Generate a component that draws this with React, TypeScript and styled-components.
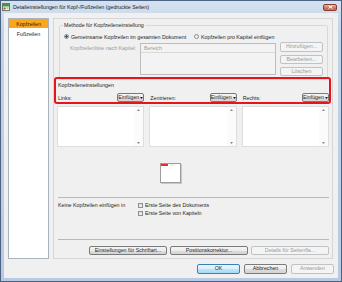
import React from 'react';
import styled, { createGlobalStyle } from 'styled-components';

const GlobalStyle = createGlobalStyle`
  html, body { margin: 0; padding: 0; background: #ffffff; }
  body {
    font-family: "Liberation Sans", Arial, sans-serif;
    font-size: 5.3px;
    color: #1e1e1e;
  }
  * { box-sizing: border-box; }
`;

const Window = styled.div`
  width: 342px;
  height: 282px;
  display: flex;
  flex-direction: column;
  border: 1px solid #4c6280;
  background: linear-gradient(#d5e1ef, #c1d3e9 30px, #b6cae3);
`;

const TitleBar = styled.div`
  height: 12px;
  display: flex;
  align-items: center;
  gap: 3px;
  padding: 0 4px 0 1px;
`;

const TitleText = styled.span`
  flex: 1;
  line-height: 6px;
  color: #1a1a1a;
  white-space: nowrap;
`;

const CloseButton = styled.div`
  width: 14px;
  height: 7px;
  border: 1px solid #8d3b2c;
  border-radius: 2px;
  background: linear-gradient(#eab0a2, #d4806d 50%, #c45f49 51%, #d07a5e);
  display: flex;
  align-items: center;
  justify-content: center;
`;

const Client = styled.div`
  flex: 1;
  margin: 0 3px 3px 3px;
  background: #f0f0f0;
  padding: 5px 4px 4px 4px;
  display: flex;
  flex-direction: column;
  gap: 5px;
  min-height: 0;
`;

const Main = styled.div`
  flex: 1;
  display: flex;
  gap: 4px;
  min-height: 0;
`;

const SideList = styled.div`
  width: 44px;
  background: #ffffff;
  border: 1px solid #aab3bd;
  display: flex;
  flex-direction: column;
`;

const SideItem = styled.div<{ $selected?: boolean }>`
  height: 9px;
  margin-bottom: 1px;
  display: flex;
  align-items: center;
  justify-content: center;
  background: ${p => (p.$selected ? '#f9a61b' : 'transparent')};
  color: #1e1e1e;
`;

const Panel = styled.div`
  flex: 1;
  margin-right: 1px;
  border: 1px solid #d6d6d6;
  position: relative;
  display: flex;
  flex-direction: column;
`;

const Highlight = styled.div`
  position: absolute;
  left: 0;
  top: 58px;
  width: 277px;
  height: 27px;
  border: 2px solid #e8141c;
  border-radius: 3px;
  pointer-events: none;
  z-index: 2;
`;

const Group = styled.fieldset`
  margin: 3px 4px 0 5px;
  padding: 0 4px 3px 4px;
  border: 1px solid #d3d9de;
  border-radius: 2px;
  min-width: 0;
`;

const Legend = styled.legend`
  padding: 0 1px;
  margin-left: -1px;
  line-height: 6px;
`;

const RadioRow = styled.div`
  margin-top: 5px;
  height: 7px;
  display: grid;
  grid-template-columns: 130px auto;
  align-items: center;
`;

const RadioOption = styled.label`
  display: flex;
  align-items: center;
  gap: 2px;
  white-space: nowrap;
`;

const RadioCircle = styled.span<{ $checked?: boolean }>`
  width: 5px;
  height: 5px;
  border-radius: 50%;
  border: 1px solid #8c8c8c;
  background: ${p =>
    p.$checked
      ? 'radial-gradient(circle, #2a5c8a 0 1.2px, #e9eef3 1.4px)'
      : 'linear-gradient(#e6e6e6, #fafafa)'};
`;

const MethodRow = styled.div`
  margin-top: 3px;
  display: flex;
  align-items: flex-start;
`;

const DimLabel = styled.div`
  width: 70px;
  margin-left: 6px;
  padding-top: 2px;
  line-height: 6px;
  color: #9a9a9a;
  white-space: nowrap;
`;

const ListBox = styled.div`
  width: 136px;
  height: 32px;
  border: 1px solid #bdbdbd;
  background: #f3f3f3;
  display: flex;
  flex-direction: column;
`;

const ListHeader = styled.div`
  height: 9px;
  border-bottom: 1px solid #d9d9d9;
  padding-left: 3px;
  display: flex;
  align-items: center;
  color: #9a9a9a;
`;

const SideButtons = styled.div`
  margin-left: 4px;
  margin-top: -1px;
  display: flex;
  flex-direction: column;
  gap: 3px;
`;

type Variant = 'normal' | 'disabled' | 'focused';

const Btn = styled.button<{ $variant?: Variant; $w: number; $h?: number }>`
  width: ${p => p.$w}px;
  height: ${p => p.$h ?? 9}px;
  padding: 0;
  margin: 0;
  font: inherit;
  line-height: 1;
  display: flex;
  align-items: center;
  justify-content: center;
  gap: 1px;
  border-radius: 2px;
  white-space: nowrap;
  border: 1px solid
    ${p =>
      p.$variant === 'disabled' ? '#bfc3c6' : p.$variant === 'focused' ? '#3c7fb1' : '#7a7a7a'};
  background: ${p =>
    p.$variant === 'disabled'
      ? '#f4f4f4'
      : p.$variant === 'focused'
      ? 'linear-gradient(#eaf6fd, #d9f0fc 50%, #bee6fd 51%, #a7d9f5)'
      : 'linear-gradient(#f4f4f4, #ececec 50%, #dedede 51%, #d3d3d3)'};
  color: ${p => (p.$variant === 'disabled' ? '#9a9a9a' : '#1e1e1e')};
`;

const Section = styled.div`
  flex: 1;
  display: flex;
  flex-direction: column;
  padding: 0 3px 3px 3px;
  min-height: 0;
`;

const SectionTitle = styled.div`
  margin-top: 2px;
  margin-left: 1px;
  line-height: 6px;
`;

const Columns = styled.div`
  margin-top: 5px;
  display: grid;
  grid-template-columns: repeat(3, 1fr);
  column-gap: 5px;
`;

const Column = styled.div`
  display: flex;
  flex-direction: column;
  gap: 4px;
`;

const ColumnHead = styled.div`
  height: 9px;
  display: flex;
  align-items: center;
  justify-content: space-between;
  padding-left: 1px;
`;

const TextBox = styled.div`
  height: 41px;
  background: #ffffff;
  border: 1px solid #dedede;
  display: flex;
  justify-content: flex-end;
`;

const ScrollTrack = styled.div`
  width: 9px;
  display: flex;
  flex-direction: column;
  justify-content: space-between;
  align-items: center;
  padding: 2px 0;
  background: #fbfbfb;
`;

const Thumb = styled.div`
  margin-top: 16px;
  margin-left: 103px;
  width: 21px;
  height: 20px;
  background: #ffffff;
  border: 1px solid #9d9d9d;
  box-shadow: 1px 1px 0 #c8c8c8;
  display: flex;
  align-items: flex-start;
  gap: 2px;
`;

const ThumbBar = styled.div<{ $color: string; $w: number }>`
  width: ${p => p.$w}px;
  height: 2px;
  background: ${p => p.$color};
`;

const Separator = styled.div<{ $mt: number }>`
  margin-top: ${p => p.$mt}px;
  margin-left: 1px;
  height: 1px;
  background: #b9b9b9;
`;

const SkipRow = styled.div`
  margin-top: 3px;
  display: flex;
  align-items: flex-start;
`;

const SkipLabel = styled.div`
  width: 80px;
  margin-left: 1px;
  height: 8px;
  display: flex;
  align-items: center;
  white-space: nowrap;
`;

const CheckList = styled.div`
  display: flex;
  flex-direction: column;
`;

const CheckItem = styled.label`
  height: 8px;
  display: flex;
  align-items: center;
  gap: 2px;
  white-space: nowrap;
`;

const CheckBox = styled.span`
  width: 5px;
  height: 5px;
  border: 1px solid #8e8f8f;
  background: linear-gradient(#dcdcdc, #f6f6f6);
`;

const Spacer = styled.div`
  flex: 1;
`;

const PanelButtons = styled.div`
  margin-top: 6px;
  display: flex;
  justify-content: flex-end;
  gap: 3px;
`;

const DialogButtons = styled.div`
  height: 10px;
  display: flex;
  justify-content: flex-end;
  gap: 4px;
`;

const Arrow = ({ down }: { down?: boolean }) => (
  <svg width="3" height="2" viewBox="0 0 3 2">
    <polygon points={down ? '0,0 3,0 1.5,2' : '0,2 3,2 1.5,0'} fill="#8a8a8a" />
  </svg>
);

const Caret = () => (
  <svg width="3" height="2" viewBox="0 0 3 2">
    <polygon points="0,0 3,0 1.5,2" fill="#1e1e1e" />
  </svg>
);

const AppIcon = () => (
  <svg width="8" height="8" viewBox="0 0 8 8">
    <rect x="0.5" y="0.5" width="7" height="7" fill="#f4f4f4" stroke="#6c7a6a" strokeWidth="1" />
    <rect x="1" y="1" width="6" height="2.5" fill="#3f9a3b" />
    <rect x="1.5" y="4.5" width="2" height="2" fill="#d23a2a" />
    <rect x="4.5" y="4.5" width="2" height="1" fill="#8a8a8a" />
  </svg>
);

const CloseGlyph = () => (
  <svg width="5" height="4" viewBox="0 0 5 4">
    <path d="M0.5 0.5 L4.5 3.5 M4.5 0.5 L0.5 3.5" stroke="#ffffff" strokeWidth="1" />
  </svg>
);

const columns = ['Links:', 'Zentrieren:', 'Rechts:'];

export default function App() {
  return (
    <>
      <GlobalStyle />
      <Window>
        <TitleBar>
          <AppIcon />
          <TitleText>Detaileinstellungen für Kopf-/Fußzeilen (gedruckte Seiten)</TitleText>
          <CloseButton>
            <CloseGlyph />
          </CloseButton>
        </TitleBar>
        <Client>
          <Main>
            <SideList>
              <SideItem $selected>Kopfzeilen</SideItem>
              <SideItem>Fußzeilen</SideItem>
            </SideList>
            <Panel>
              <Highlight />
              <Group>
                <Legend>Methode für Kopfzeileneinstellung</Legend>
                <RadioRow>
                  <RadioOption>
                    <RadioCircle $checked />
                    Gemeinsame Kopfzeilen im gesamten Dokument
                  </RadioOption>
                  <RadioOption>
                    <RadioCircle />
                    Kopfzeilen pro Kapitel einfügen
                  </RadioOption>
                </RadioRow>
                <MethodRow>
                  <DimLabel>Kopfzeilenliste nach Kapitel:</DimLabel>
                  <ListBox>
                    <ListHeader>Bereich</ListHeader>
                  </ListBox>
                  <SideButtons>
                    <Btn $variant="disabled" $w={43} $h={10}>Hinzufügen...</Btn>
                    <Btn $variant="disabled" $w={43}>Bearbeiten...</Btn>
                    <Btn $variant="disabled" $w={43}>Löschen</Btn>
                  </SideButtons>
                </MethodRow>
              </Group>
              <Section>
                <SectionTitle>Kopfzeileneinstellungen</SectionTitle>
                <Columns>
                  {columns.map(c => (
                    <Column key={c}>
                      <ColumnHead>
                        <span>{c}</span>
                        <Btn $w={27}>
                          Einfügen
                          <Caret />
                        </Btn>
                      </ColumnHead>
                      <TextBox>
                        <ScrollTrack>
                          <Arrow />
                          <Arrow down />
                        </ScrollTrack>
                      </TextBox>
                    </Column>
                  ))}
                </Columns>
                <Thumb>
                  <ThumbBar $color="#ee2a2a" $w={7} />
                  <ThumbBar $color="#eeeeee" $w={4} />
                </Thumb>
                <Separator $mt={14} />
                <SkipRow>
                  <SkipLabel>Keine Kopfzeilen einfügen in</SkipLabel>
                  <CheckList>
                    <CheckItem>
                      <CheckBox />
                      Erste Seite des Dokuments
                    </CheckItem>
                    <CheckItem>
                      <CheckBox />
                      Erste Seite von Kapiteln
                    </CheckItem>
                  </CheckList>
                </SkipRow>
                <Spacer />
                <Separator $mt={0} />
                <PanelButtons>
                  <Btn $w={78}>Einstellungen für Schriftart...</Btn>
                  <Btn $w={78}>Positionskorrektur...</Btn>
                  <Btn $variant="disabled" $w={78}>Details für Seitenfla...</Btn>
                </PanelButtons>
              </Section>
            </Panel>
          </Main>
          <DialogButtons>
            <Btn $variant="focused" $w={43} $h={10}>OK</Btn>
            <Btn $w={43} $h={10}>Abbrechen</Btn>
            <Btn $variant="disabled" $w={43} $h={10}>Anwenden</Btn>
          </DialogButtons>
        </Client>
      </Window>
    </>
  );
}
